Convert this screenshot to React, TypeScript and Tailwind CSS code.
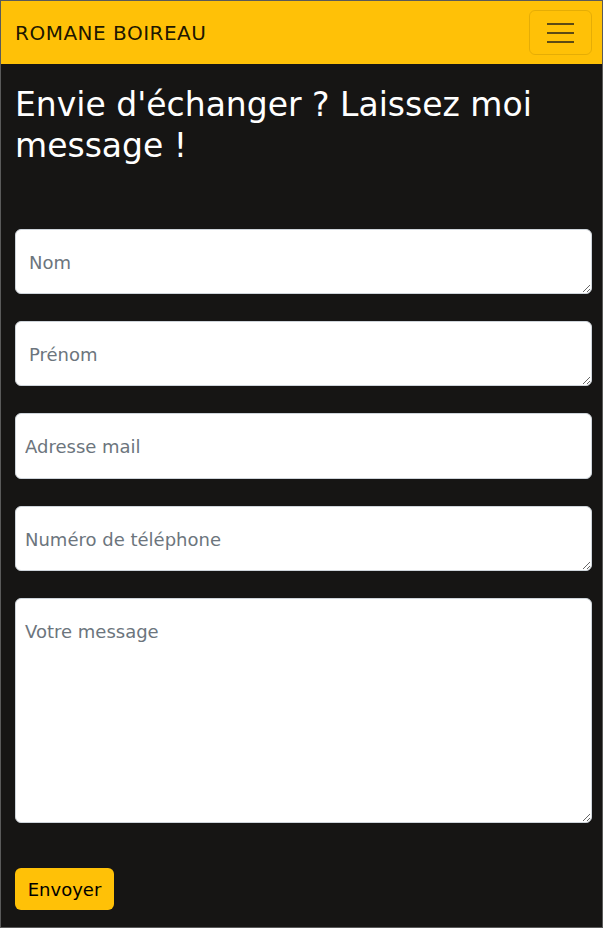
import React from "react";

const font = { fontFamily: '"DejaVu Sans", "Open Sans", sans-serif' };

export default function App() {
  const fieldBase =
    "block w-full h-[65px] rounded-[6px] border border-[#ced4da] bg-white text-[18px] leading-[24px] text-[#212529] placeholder:text-[#6c757d] outline-none";
  return (
    <div
      className="w-[603px] h-[928px] border border-[#5a5a5a] bg-[#161514] overflow-hidden flex flex-col"
      style={font}
    >
      <nav className="h-[63px] shrink-0 bg-[#ffc107] flex items-center justify-between pl-[14px] pr-[10px]">
        <span className="text-[20px] text-black/90 leading-none tracking-[0.5px]">ROMANE BOIREAU</span>
        <button className="w-[63px] h-[45px] rounded-[6px] border border-black/10 flex flex-col items-center justify-center gap-[7px]">
          <span className="block w-[27px] h-[2px] bg-[#5c4a14]" />
          <span className="block w-[27px] h-[2px] bg-[#5c4a14]" />
          <span className="block w-[27px] h-[2px] bg-[#5c4a14]" />
        </button>
      </nav>
      <main className="pl-[14px] pr-[10px] pt-[20px]">
        <h1 className="text-[33px] leading-[41px] text-white">
          Envie d'échanger ? Laissez moi message !
        </h1>
        <form className="mt-[63px] flex flex-col gap-[27px]">
          <textarea className={`${fieldBase} pt-[21px] pl-[13px] resize-y`} placeholder="Nom" />
          <textarea className={`${fieldBase} pt-[21px] pl-[13px] resize-y`} placeholder="Prénom" />
          <input type="email" className={`${fieldBase} h-[66px] pl-[9px]`} placeholder="Adresse mail" />
          <textarea className={`${fieldBase} pt-[21px] pl-[9px] resize-y`} placeholder="Numéro de téléphone" />
          <textarea className={`${fieldBase} h-[225px] pt-[21px] pl-[9px] resize-y`} placeholder="Votre message" />
          <div className="pt-[18px]">
            <button
              type="button"
              className="h-[42px] w-[99px] rounded-[6px] bg-[#ffc107] text-[18px] text-black"
            >
              Envoyer
            </button>
          </div>
        </form>
      </main>
    </div>
  );
}
